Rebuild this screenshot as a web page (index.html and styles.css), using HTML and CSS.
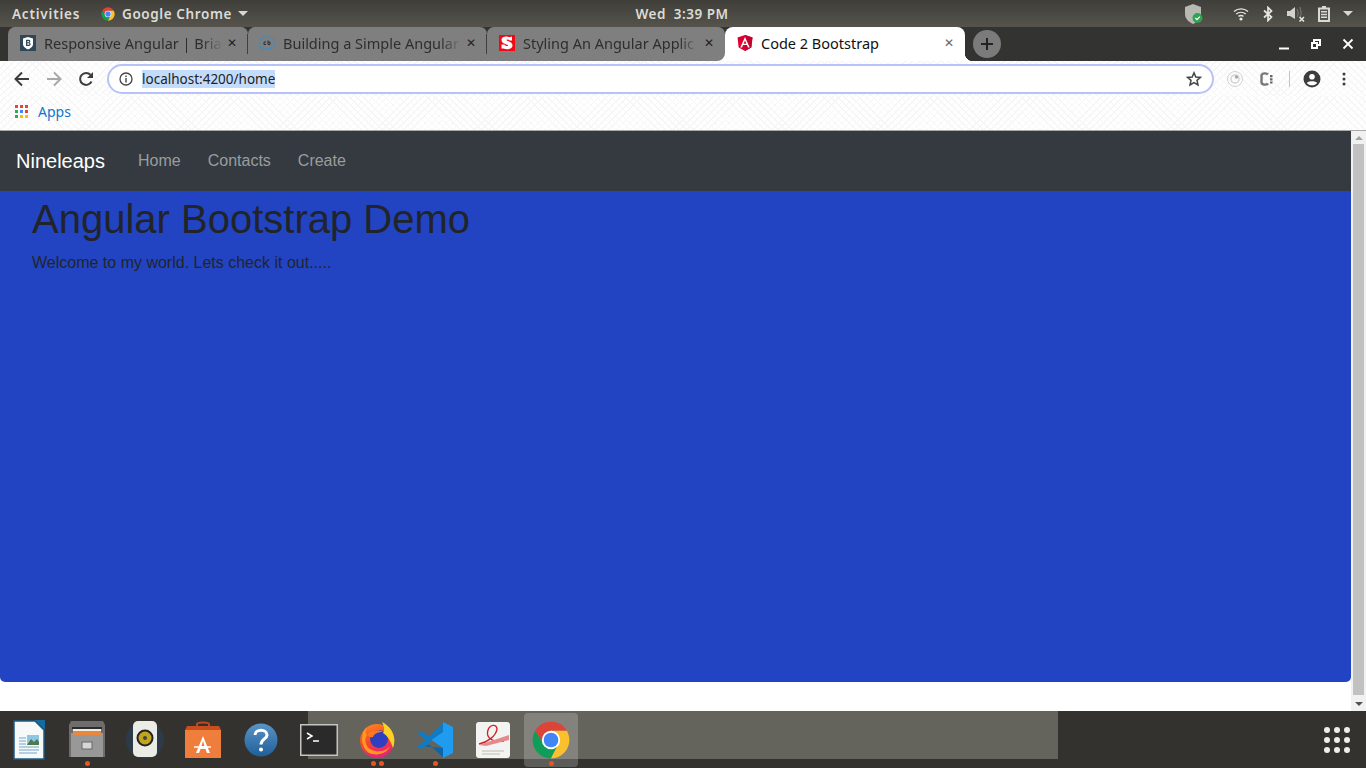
FILE: index.html
```html
<!DOCTYPE html>
<html lang="en">
<head>
    <meta charset="UTF-8">
    <title>Code 2 Bootstrap</title>
    <link rel="stylesheet" href="styles.css">
</head>
<body>
    <svg class="defs" width="0" height="0">
        <symbol id="chrome" viewBox="0 0 48 48">
            <path fill="#db4437" d="M24 24L16.2 28.5 6.68 14A20 20 0 0 1 41.32 14L24 14Z"/>
            <path fill="#0f9d58" d="M24 24L31.8 28.5 24 44A20 20 0 0 1 6.68 14L16.2 28.5Z"/>
            <path fill="#fbc02d" d="M24 24L24 14 41.32 14A20 20 0 0 1 24 44L31.8 28.5Z"/>
            <circle cx="24" cy="24" r="10" fill="#fff"/>
            <circle cx="24" cy="24" r="8" fill="#4285f4"/>
        </symbol>
    </svg>

    <!-- gnome top bar -->
    <div class="topbar">
        <div class="top-left">
            <span class="activities">Activities</span>
            <span class="app-menu">
                <svg class="app-icon" width="16" height="16"><use href="#chrome"/></svg>
                Google Chrome
                <span class="caret"></span>
            </span>
        </div>
        <div class="clock">Wed&nbsp; 3:39 PM</div>
        <div class="tray">
            <svg class="tray-shield" width="20" height="22" viewBox="0 0 20 22">
                <path fill="#b9b9b4" d="M9 1L17 4V11C17 16 13 19 9 21 5 19 1 16 1 11V4Z"/>
                <circle cx="13.500" cy="15" r="5" fill="#2ea44f"/>
                <path fill="none" stroke="#fff" stroke-width="1.300" d="M11.300 15L13 16.600 15.800 13.600"/>
            </svg>
            <svg class="tray-wifi" width="16" height="14" viewBox="0 0 16 14">
                <g fill="none" stroke="#e6e6e2" stroke-width="1.400">
                    <path d="M1 4.500C5 1 11 1 15 4.500"/>
                    <path d="M3.200 7C6 4.800 10 4.800 12.800 7"/>
                    <path d="M5.500 9.300C7 8.300 9 8.300 10.500 9.300"/>
                </g>
                <circle cx="8" cy="12" r="1.600" fill="#e6e6e2"/>
            </svg>
            <svg class="tray-bt" width="10" height="16" viewBox="0 0 10 16">
                <path fill="none" stroke="#e6e6e2" stroke-width="1.700" d="M1 4.500L8.500 11 5 14.500V1.500L8.500 5 1 11.500"/>
            </svg>
            <svg class="tray-vol" width="18" height="16" viewBox="0 0 18 16">
                <path fill="#d2d2ce" d="M0 5H3L8 1V13L3 10H0Z"/>
                <path fill="none" stroke="#77766f" stroke-width="1.200" d="M10 3C11.500 5 11.500 9 10 11M12.500 1C14.500 4 14.500 9 13 11"/>
                <path fill="none" stroke="#e6e6e2" stroke-width="1.500" d="M12.500 11L17 15.500M17 11L12.500 15.500"/>
            </svg>
            <svg class="tray-batt" width="12" height="16" viewBox="0 0 12 16">
                <path fill="#d8d8d4" d="M4 0H8V1.500H12V16H0V1.500H4Z"/>
                <path fill="#55544d" d="M2 3.500H10V14H2Z"/>
                <path fill="#d8d8d4" d="M3 5H9V6.500H3ZM3 7.800H9V9.300H3ZM3 10.600H9V12.100H3Z"/>
            </svg>
            <span class="caret"></span>
        </div>
    </div>

    <!-- tab strip -->
    <div class="tabstrip">
        <div class="tab tab-first">
            <svg class="favicon" width="16" height="16" viewBox="0 0 16 16">
                <rect width="16" height="16" fill="#2f4858"/>
                <path fill="#fff" d="M8 2L13 3.500V9C13 12 10 13.500 8 14.500 6 13.500 3 12 3 9V3.500Z"/>
                <path fill="#2f4858" d="M6 4.800H9C10.700 4.800 10.700 7.300 9.500 7.600 11 7.900 11 11 9 11H6ZM7.300 6V7.200H8.600C9.300 7.200 9.300 6 8.600 6ZM7.300 8.300V9.800H8.800C9.600 9.800 9.600 8.300 8.800 8.300Z"/>
            </svg>
            <span class="tab-title">Responsive Angular | Bria</span>
            <span class="tab-close">&#10005;</span>
        </div>
        <div class="tab tab-second">
            <svg class="favicon" width="20" height="16" viewBox="0 0 20 16">
                <path fill="none" stroke="#2d8fd0" stroke-width="1.600" stroke-dasharray="1.600 1.200" d="M3 5C6 1 14 1 17 5M3 11C6 15 14 15 17 11M1.500 8H3M17 8H18.500"/>
                <path fill="none" stroke="#26333c" stroke-width="1" d="M9 7H7V9.500H9M11 5.500V9.500H13V7H11"/>
            </svg>
            <span class="tab-title">Building a Simple Angular</span>
            <span class="tab-close">&#10005;</span>
        </div>
        <div class="tab tab-third">
            <svg class="favicon" width="16" height="16" viewBox="0 0 16 16">
                <rect width="16" height="16" fill="#f00a16"/>
                <path fill="#fff" d="M13 1.500V5.500H10.500C10 4.300 7.500 4 7.500 5 7.500 6.200 13.500 6.500 13.500 10.500 13.500 14.500 7 15 4.500 13.500H2.500V9.500H5.500C6 11 9 11.500 9 10.500 9 9.300 2.500 9 2.500 5 2.500 1.500 8 0.800 10.500 2.300Z"/>
            </svg>
            <span class="tab-title">Styling An Angular Applic</span>
            <span class="tab-close">&#10005;</span>
        </div>
        <div class="tab tab-active">
            <svg class="favicon" width="16" height="16" viewBox="0 0 16 16">
                <path fill="#dd0031" d="M8 0L15.500 2.600 14.300 12.500 8 16 1.700 12.500 0.500 2.600Z"/>
                <path fill="#c3002f" d="M8 0L15.500 2.600 14.300 12.500 8 16Z"/>
                <path fill="#fff" d="M8 2L3.300 12.400H5L6 10H10L11 12.400H12.700ZM8 5.500L9.400 8.700H6.600Z"/>
            </svg>
            <span class="tab-title">Code 2 Bootstrap</span>
            <span class="tab-close">&#10005;</span>
        </div>
        <div class="new-tab">
            <svg width="14" height="14" viewBox="0 0 14 14"><path stroke="#222" stroke-width="2" d="M7 1V13M1 7H13"/></svg>
        </div>
        <div class="win-controls">
            <svg width="12" height="12" viewBox="0 0 12 12"><path fill="#fff" d="M1 9.500H11V11.500H1Z"/></svg>
            <svg width="12" height="12" viewBox="0 0 12 12"><path fill="#fff" fill-rule="evenodd" d="M3 1H11V8H8V11H1V4H3ZM5 3V4H8V6H9V3ZM3 6V9H6V6Z"/></svg>
            <svg width="12" height="12" viewBox="0 0 12 12"><path stroke="#fff" stroke-width="1.800" d="M1.500 1.500L10.500 10.500M10.500 1.500L1.500 10.500"/></svg>
        </div>
    </div>

    <!-- address bar -->
    <div class="toolbar">
        <svg class="nav-icon" width="16" height="16" viewBox="0 0 16 16"><path fill="none" stroke="#3c3c3c" stroke-width="2" d="M15 8H2M8 1.500L1.500 8 8 14.500"/></svg>
        <svg class="nav-icon" width="16" height="16" viewBox="0 0 16 16"><path fill="none" stroke="#a8a8a8" stroke-width="2" d="M1 8H14M8 1.500L14.500 8 8 14.500"/></svg>
        <svg class="nav-icon" width="16" height="16" viewBox="0 0 16 16"><path fill="none" stroke="#3c3c3c" stroke-width="2" d="M13.500 10.500A6 6 0 1 1 12.500 3.800"/><path fill="#3c3c3c" d="M15 1V7H9Z"/></svg>
        <div class="omnibox">
            <svg width="14" height="14" viewBox="0 0 14 14">
                <circle cx="7" cy="7" r="6" fill="none" stroke="#444" stroke-width="1.300"/>
                <path stroke="#444" stroke-width="1.400" d="M7 6V10.500M7 3.500V5"/>
            </svg>
            <span class="url">localhost:4200/home</span>
            <svg class="star" width="16" height="16" viewBox="0 0 16 16"><path fill="none" stroke="#444" stroke-width="1.500" d="M8 1.800L9.800 6 14.500 6.400 11 9.400 12 14 8 11.600 4 14 5 9.400 1.500 6.400 6.200 6Z"/></svg>
        </div>
        <div class="ext-icons">
            <svg width="18" height="18" viewBox="0 0 18 18">
                <g fill="none" stroke="#d3d3d3">
                    <circle cx="9" cy="9" r="7.500"/>
                    <circle cx="9" cy="9" r="4" stroke-width="1.500"/>
                </g>
                <circle cx="10.500" cy="7" r="1.800" fill="#aaa"/>
            </svg>
            <svg class="ext-c" width="13" height="14" viewBox="0 0 13 14">
                <path fill="none" stroke="#777" stroke-width="2.400" d="M8 2.500C7 1 2 0.800 1.500 3.500V10.500C2 13.200 7 13 8 11.500"/>
                <path fill="#666" d="M10 3H12.500V5.200H10ZM10 6.200H12.500V8.400H10ZM10 9.400H12.500V11.600H10Z"/>
            </svg>
            <span class="ext-sep"></span>
            <svg width="18" height="18" viewBox="0 0 18 18">
                <circle cx="9" cy="9" r="8.500" fill="#3c3c3c"/>
                <circle cx="9" cy="6.800" r="2.800" fill="#fff"/>
                <path fill="#fff" d="M3.800 13C5 10.800 13 10.800 14.200 13 13 14.600 11 15.300 9 15.300 7 15.300 5 14.600 3.800 13Z"/>
            </svg>
            <svg width="4" height="14" viewBox="0 0 4 14" class="ext-menu">
                <circle cx="2" cy="2" r="1.500" fill="#3c3c3c"/>
                <circle cx="2" cy="7" r="1.500" fill="#3c3c3c"/>
                <circle cx="2" cy="12" r="1.500" fill="#3c3c3c"/>
            </svg>
        </div>
    </div>

    <div class="bookmarks">
        <svg width="13" height="13" viewBox="0 0 13 13">
            <path fill="#ea4335" d="M0 0H3V3H0ZM5 0H8V3H5ZM10 0H13V3H10Z"/>
            <path fill="#34a853" d="M0 5H3V8H0Z"/>
            <path fill="#4285f4" d="M5 5H8V8H5Z"/>
            <path fill="#ea4335" d="M10 5H13V8H10Z"/>
            <path fill="#34a853" d="M0 10H3V13H0Z"/>
            <path fill="#fbbc05" d="M5 10H8V13H5ZM10 10H13V13H10Z"/>
        </svg>
        <span class="bm-label">Apps</span>
    </div>

    <!-- the page itself -->
    <div class="viewport">
        <div class="page">
            <nav class="navbar">
                <a class="brand">Nineleaps</a>
                <ul class="nav-links">
                    <li>Home</li>
                    <li>Contacts</li>
                    <li>Create</li>
                </ul>
            </nav>
            <main class="hero">
                <h1>Angular Bootstrap Demo</h1>
                <p>Welcome to my world. Lets check it out.....</p>
            </main>
        </div>
        <div class="scrollbar">
            <span class="arrow-up"></span>
            <span class="thumb"></span>
            <span class="arrow-down"></span>
        </div>
    </div>

    <!-- ubuntu dock -->
    <div class="dock">
        <div class="dock-item">
            <svg width="32" height="40" viewBox="0 0 32 40">
                <path fill="#f7f8f8" stroke="#1c5d84" stroke-width="1.500" d="M1 1H22L31 10V39H1Z"/>
                <path fill="#156a9e" d="M22 0H32V10Z"/>
                <path fill="#8ec6e6" d="M14 15H26V25H14Z"/>
                <path fill="#4f7a4d" d="M14 25L18 19 21 22 24 19 26 22V25Z"/>
                <path fill="none" stroke="#6fa8cb" stroke-width="1.200" d="M6 18H13M6 21H13M6 24H13M6 27H26M6 30H26M6 33H24"/>
            </svg>
        </div>
        <div class="dock-item running">
            <svg width="36" height="38" viewBox="0 0 36 38">
                <path fill="#6d6d6d" d="M2 0H34L36 4V36H0V4Z"/>
                <path fill="#989898" d="M2 12H34V36H2Z"/>
                <path fill="#2c2c2c" d="M3 6H33V8H3Z"/>
                <path fill="#f0ede0" d="M4 8H32V10H4Z"/>
                <path fill="#e8873f" d="M4 10H32V14H4Z"/>
                <rect x="13" y="21" width="10" height="7" fill="#d6d6d6" stroke="#666"/>
            </svg>
        </div>
        <div class="dock-item">
            <svg width="40" height="40" viewBox="0 0 40 40">
                <circle cx="20" cy="20" r="19" fill="#2d3a47"/>
                <rect x="8" y="1" width="24" height="36" rx="5" fill="#ecece6"/>
                <circle cx="20" cy="18" r="8.500" fill="#222"/>
                <circle cx="20" cy="18" r="6.500" fill="#c2a51a"/>
                <circle cx="20" cy="18" r="2" fill="#444"/>
            </svg>
        </div>
        <div class="dock-item">
            <svg width="36" height="38" viewBox="0 0 36 38">
                <path fill="none" stroke="#c2481d" stroke-width="2" d="M12 8V3C12 1 24 1 24 3V8"/>
                <path fill="#c84e1e" d="M2 5H34L36 9H0Z"/>
                <path fill="#ef7d3c" d="M0 9H36V37H0Z"/>
                <path fill="#fff" d="M18 15L25 32H22L20.500 28H15.500L14 32H11ZM18 20L16.500 25H19.500Z"/>
                <path stroke="#fff" stroke-width="1.500" d="M9 26H26"/>
            </svg>
        </div>
        <div class="dock-item">
            <svg width="34" height="34" viewBox="0 0 34 34">
                <defs>
                    <linearGradient id="helpBlue" x1="0" y1="0" x2="0" y2="1">
                        <stop offset="0" stop-color="#5a94c6"/>
                        <stop offset="1" stop-color="#1f5f99"/>
                    </linearGradient>
                </defs>
                <circle cx="17" cy="17" r="16.500" fill="url(#helpBlue)"/>
                <path fill="none" stroke="#fff" stroke-width="3" d="M11 12C11 5.500 23 5.500 23 12 23 16 17 16 17 21.500"/>
                <circle cx="17" cy="26.500" r="2" fill="#fff"/>
            </svg>
        </div>
        <div class="dock-item">
            <svg width="38" height="32" viewBox="0 0 38 32">
                <rect x="0.750" y="0.750" width="36.500" height="30.500" fill="#2a2a2a" stroke="#c4c4c0" stroke-width="1.500"/>
                <path fill="none" stroke="#fff" stroke-width="1.500" d="M7 9L12 12 7 15M13 17H19"/>
            </svg>
        </div>
        <div class="dock-item running-two">
            <svg width="36" height="36" viewBox="0 0 36 36">
                <defs>
                    <linearGradient id="foxBody" x1="0" y1="0" x2="0.300" y2="1">
                        <stop offset="0" stop-color="#ff8a1e"/>
                        <stop offset="0.600" stop-color="#f5442c"/>
                        <stop offset="1" stop-color="#e8247a"/>
                    </linearGradient>
                </defs>
                <circle cx="18" cy="19" r="17" fill="url(#foxBody)"/>
                <circle cx="20" cy="17" r="9" fill="#2f3fc0"/>
                <path fill="#ffd024" d="M23 0C33 5 38 15 34 26 32 20 29 14 24 11 26 8 25 4 23 0Z"/>
                <path fill="#ff9a1f" d="M8 5C6 9 6 11 8 13 5 16 6 24 11 27 17 31 27 30 31 24 28 33 12 36 6 27 1 20 3 9 8 5Z"/>
                <path fill="#ff7a1f" d="M9 12C13 8 20 7 24 10 20 10 15 11 14 15 11 16 9 14 9 12Z"/>
            </svg>
        </div>
        <div class="dock-item running">
            <svg width="36" height="36" viewBox="0 0 36 36">
                <path fill="#0e7cc5" d="M26 1V10L8 24.500 3.500 27 0.500 24.500 9 18 0.500 11.500 3.500 9 8 11.500 12 14.500Z"/>
                <path fill="#0a66a8" d="M8 24.500L26 26V35L12 22.500Z"/>
                <path fill="#1f9cf0" d="M26 0L36 5V31L26 36ZM26 10V26L14.500 18Z"/>
            </svg>
        </div>
        <div class="dock-item">
            <svg width="34" height="36" viewBox="0 0 34 36">
                <rect width="34" height="36" rx="3" fill="#f3f3f1"/>
                <path fill="none" stroke="#c9232c" stroke-width="1.400" d="M3 22C12 20 20 14 21 7 21 2 14 2 12 8 10 14 14 21 28 19"/>
                <path fill="#e58a8a" d="M3 23L33 13V18L10 24Z"/>
                <path stroke="#bbb" d="M6 29H28M6 32H24"/>
            </svg>
        </div>
        <div class="dock-item dock-current running">
            <svg width="44" height="44"><use href="#chrome"/></svg>
        </div>
        <div class="show-apps">
            <span></span><span></span><span></span>
            <span></span><span></span><span></span>
            <span></span><span></span><span></span>
        </div>
    </div>
</body>
</html>
```

FILE: styles.css
```css
* {
    box-sizing: border-box;
}
html, body {
    height: 100%;
}
body {
    margin: 0;
    width: 1366px;
    height: 768px;
    overflow: hidden;
    display: flex;
    flex-direction: column;
    font-family: "Liberation Sans", Arial, sans-serif;
    background-color: #fff;
}
.defs {
    display: block;
    height: 0;
}

/* top bar */
.topbar {
    height: 27px;
    flex: none;
    display: grid;
    grid-template-columns: 1fr auto 1fr;
    align-items: center;
    padding: 0 12px;
    background: linear-gradient(#3f3e39, #55534c);
    color: #dcdcd4;
    font-family: "Noto Sans", sans-serif;
    font-size: 13.500px;
    font-weight: 600;
}
.top-left {
    display: flex;
    align-items: center;
}
.activities {
    width: 88px;
    letter-spacing: 0.800px;
}
.app-menu {
    display: flex;
    align-items: center;
    letter-spacing: 0.600px;
}
.app-icon {
    margin-right: 6px;
}
.caret {
    display: inline-block;
    width: 0;
    height: 0;
    margin-left: 6px;
    border-left: 5px solid transparent;
    border-right: 5px solid transparent;
    border-top: 5px solid #d8d8d2;
}
.clock {
    padding-right: 2px;
    letter-spacing: 0.500px;
}
.tray {
    display: flex;
    align-items: center;
    justify-content: flex-end;
    padding-right: 1px;
}
.tray-shield {
    margin-right: 29px;
}
.tray-wifi {
    margin-right: 14px;
}
.tray-bt {
    margin-right: 14px;
}
.tray-vol {
    margin-right: 13px;
}
.tray-batt {
    margin-right: 7px;
}

/* tabs */
.tabstrip {
    height: 34px;
    flex: none;
    display: flex;
    align-items: stretch;
    padding-left: 8px;
    background-color: #333331;
}
.tab {
    position: relative;
    display: flex;
    align-items: center;
    height: 34px;
    padding: 0 9px 2px 12px;
    background-color: #7f7f7f;
    color: #2e2e2e;
    font-family: "Noto Sans", sans-serif;
    font-size: 14.500px;
    border-radius: 7px 7px 0 0;
}
.tab-first::after,
.tab-second::after {
    content: "";
    position: absolute;
    right: 0;
    top: 7px;
    width: 1px;
    height: 20px;
    background-color: #3f3f3f;
}
.tab-first {
    width: 240px;
}
.tab-second {
    width: 239px;
}
.tab-third {
    z-index: 1;
    width: 238px;
    border-radius: 7px 7px 8px 0;
}
.tab-active {
    width: 240px;
    background-color: #fff;
    color: #111;
    border-radius: 8px 8px 0 0;
}
.tab-active::before {
    content: "";
    position: absolute;
    left: -8px;
    bottom: 0;
    width: 8px;
    height: 8px;
    background-color: #fff;
}
.tab-active::after {
    content: "";
    position: absolute;
    right: -8px;
    bottom: 0;
    width: 8px;
    height: 8px;
    background: radial-gradient(circle at 100% 0, #333331 8px, #fff 8.500px);
}
.favicon {
    flex: none;
    margin-right: 8px;
}
.tab-second .favicon {
    margin-left: -3px;
    margin-right: 6px;
}
.tab-title {
    flex: 1;
    min-width: 0;
    white-space: nowrap;
    -webkit-mask-image: linear-gradient(to right, #000 88%, transparent);
    mask-image: linear-gradient(to right, #000 88%, transparent);
}
.tab-active .tab-title {
    -webkit-mask-image: none;
    mask-image: none;
}
.tab-close {
    flex: none;
    width: 14px;
    margin-left: 2px;
    text-align: center;
    font-family: "DejaVu Sans", sans-serif;
    font-size: 12px;
    color: #222;
}
.tab-active .tab-close {
    color: #666;
}
.new-tab {
    width: 28px;
    height: 28px;
    margin: 3px 0 0 8px;
    display: flex;
    align-items: center;
    justify-content: center;
    border-radius: 50%;
    background-color: #7b7b7b;
}
.win-controls {
    margin-left: auto;
    display: flex;
    align-items: center;
    gap: 20px;
    padding-right: 12px;
}

/* toolbar */
.toolbar,
.bookmarks {
    background-color: #fff;
    background-image:
        repeating-linear-gradient(45deg, #f6f6f6 0 1px, transparent 1px 5px),
        repeating-linear-gradient(-45deg, #f6f6f6 0 1px, transparent 1px 5px);
}
.toolbar {
    height: 35px;
    flex: none;
    display: flex;
    align-items: center;
    padding-left: 14px;
}
.nav-icon {
    margin-right: 16px;
}
.toolbar .nav-icon:nth-child(3) {
    margin-right: 13px;
}
.omnibox {
    width: 1107px;
    height: 30px;
    display: flex;
    align-items: center;
    padding: 0 10px 0 10px;
    background-color: #fff;
    border: 2px solid #b7c2f8;
    border-radius: 15px;
    font-family: "Noto Sans", sans-serif;
    font-size: 13.500px;
    color: #222;
}
.url {
    margin-left: 9px;
    background-color: #c4dcfb;
    line-height: 18px;
}
.star {
    margin-left: auto;
}
.ext-icons {
    flex: 1;
    display: flex;
    align-items: center;
    padding-left: 12px;
}
.ext-c {
    margin-left: 16px;
}
.ext-sep {
    width: 1px;
    height: 16px;
    margin: 0 13px 0 16px;
    background-color: #c4c4c4;
}
.ext-menu {
    margin-left: 21px;
}

/* bookmarks */
.bookmarks {
    height: 35px;
    flex: none;
    display: flex;
    align-items: center;
    padding: 0 0 3px 15px;
    border-bottom: 1px solid #a9a9a9;
}
.bm-label {
    margin-left: 10px;
    font-family: "Noto Sans", sans-serif;
    font-size: 14px;
    color: #0f76c8;
}

/* page */
.viewport {
    flex: 1;
    min-height: 0;
    display: flex;
}
.page {
    flex: 1;
    display: flex;
    flex-direction: column;
    padding-bottom: 29px;
}
.navbar {
    height: 60px;
    flex: none;
    display: flex;
    align-items: center;
    padding: 0 16px;
    background-color: #343a40;
}
.brand {
    width: 122px;
    font-size: 20px;
    color: #fff;
}
.nav-links {
    display: flex;
    gap: 27px;
    margin: 0;
    padding: 0;
    list-style: none;
    font-size: 16px;
    color: #9a9d9f;
}
.hero {
    flex: 1;
    padding: 4px 32px 0;
    background-color: #2244c2;
    border-radius: 0 0 5px 5px;
    color: #212529;
}
.hero h1 {
    margin: 0 0 8px;
    font-size: 40px;
    font-weight: 400;
    line-height: 48px;
}
.hero p {
    margin: 0;
    font-size: 16px;
    line-height: 24px;
}
.scrollbar {
    width: 15px;
    flex: none;
    display: flex;
    flex-direction: column;
    align-items: center;
    padding: 5px 0;
    background-color: #f1f1f1;
}
.arrow-up {
    border-left: 4px solid transparent;
    border-right: 4px solid transparent;
    border-bottom: 4px solid #a3a3a3;
}
.arrow-down {
    border-left: 4px solid transparent;
    border-right: 4px solid transparent;
    border-top: 4px solid #505050;
}
.thumb {
    flex: 1;
    width: 11px;
    margin: 4px 0 7px;
    background-color: #c1c1c1;
}

/* dock */
.dock {
    height: 57px;
    flex: none;
    display: flex;
    align-items: flex-start;
    background-color: #33322e;
    background-image: linear-gradient(#64635c, #64635c);
    background-size: 750px 48px;
    background-position: 308px 0;
    background-repeat: no-repeat;
}
.dock-item {
    position: relative;
    width: 58px;
    height: 54px;
    margin-top: 2px;
    display: flex;
    align-items: center;
    justify-content: center;
    border-radius: 4px;
}
.running::after,
.running-two::after {
    content: "";
    position: absolute;
    left: 50%;
    bottom: 1px;
    width: 5px;
    height: 5px;
    margin-left: -2px;
    border-radius: 50%;
    background-color: #e95420;
}
.running-two::before {
    content: "";
    position: absolute;
    left: 50%;
    bottom: 1px;
    width: 5px;
    height: 5px;
    margin-left: -6px;
    border-radius: 50%;
    background-color: #e95420;
}
.running-two::after {
    margin-left: 2px;
}
.dock-current {
    width: 54px;
    margin-left: 2px;
    background-color: rgba(255, 255, 255, 0.2);
}
.show-apps {
    margin: 16px 16px 0 auto;
    width: 26px;
    display: grid;
    grid-template-columns: repeat(3, 6px);
    gap: 4px;
}
.show-apps span {
    width: 6px;
    height: 6px;
    border-radius: 50%;
    background-color: #eeeeea;
}
```
